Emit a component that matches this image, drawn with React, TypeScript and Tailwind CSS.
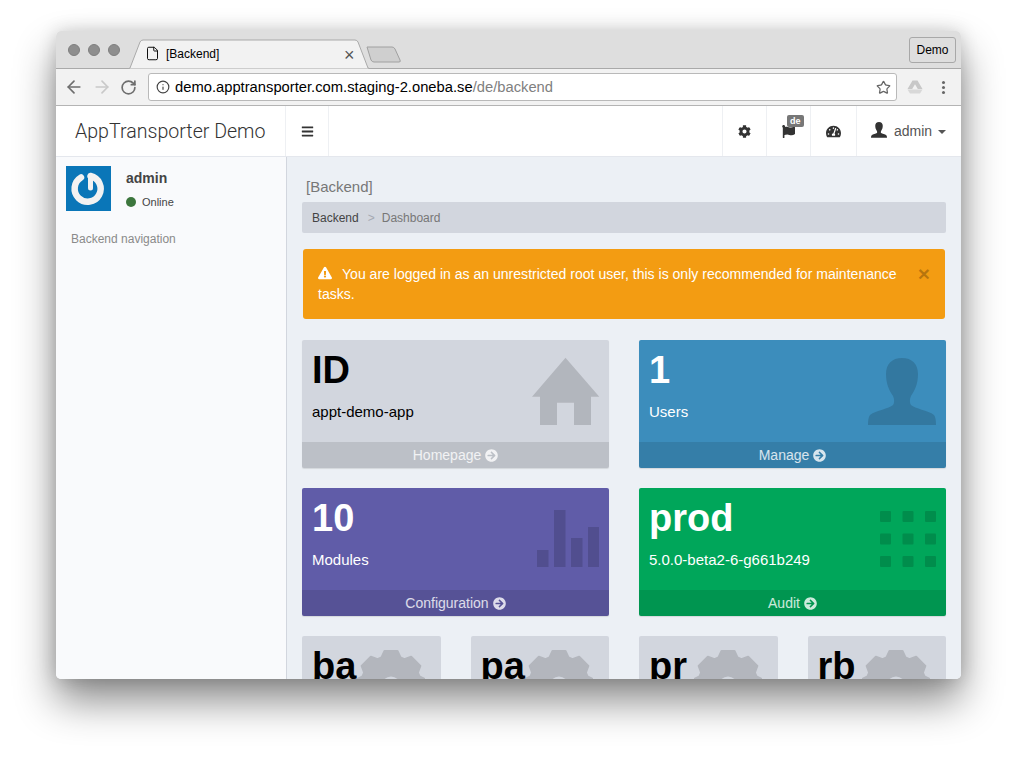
import type { ReactNode } from "react";
import { ArrowLeft, ArrowRight, File, Info, RotateCw, Star } from "lucide-react";
import {
  FaArrowCircleRight,
  FaBars,
  FaCog,
  FaExclamationTriangle,
  FaFlag,
  FaTachometerAlt,
} from "react-icons/fa";

const PERSON =
  "M34 0C44 0 50 6 50 16C50 26 47 32 43 38C41.5 41 41.5 45 43 47C47 51 60 52 66 57C67.5 59 68 62 68 67L0 67C0 62 .5 59 2 57C8 52 21 51 25 47C26.5 45 26.5 41 25 38C21 32 18 26 18 16C18 6 24 0 34 0Z";

function gearPath() {
  const cx = 34;
  const cy = 36;
  const pts: string[] = [];
  for (let i = 0; i < 8; i++) {
    const a = (i * Math.PI) / 4 - Math.PI / 2;
    const cos = Math.cos(a);
    const sin = Math.sin(a);
    const at = (r: number, w: number) =>
      `${(cx + r * cos - w * sin).toFixed(2)} ${(cy + r * sin + w * cos).toFixed(2)}`;
    pts.push(at(28.5, -9.5), at(35, -6.5), at(35, 6.5), at(28.5, 9.5));
  }
  return `M${pts.join("L")}Z`;
}

function HomeIcon() {
  return (
    <svg width="68" height="68" viewBox="0 0 68 68" className="absolute right-[9px] top-[17px] text-black/15">
      <path fill="currentColor" fillRule="evenodd" d="M33.5 0.7L67.3 39.7H59V68H42V45.7H25V68H8V39.7H0Z" />
    </svg>
  );
}

function PersonIcon() {
  return (
    <svg width="68" height="68" viewBox="0 0 68 68" className="absolute right-[10px] top-[18px] text-black/15">
      <path fill="currentColor" d={PERSON} />
    </svg>
  );
}

function BarsIcon() {
  return (
    <svg width="62" height="57" viewBox="0 0 62 57" className="absolute right-[10px] top-[22px] text-black/15">
      <g fill="currentColor">
        <rect x="0" y="40" width="11.5" height="17" />
        <rect x="17" y="0" width="11.5" height="57" />
        <rect x="34" y="28" width="11.5" height="29" />
        <rect x="51" y="17" width="11" height="40" />
      </g>
    </svg>
  );
}

function GridIcon() {
  const pos = [0, 22.5, 45];
  return (
    <svg width="56" height="56" viewBox="0 0 56 56" className="absolute right-[10px] top-[23px] text-black/15">
      <g fill="currentColor">
        {pos.map((y) =>
          pos.map((x) => <rect key={`${x}-${y}`} x={x} y={y} width="11" height="11" rx="1" />),
        )}
      </g>
    </svg>
  );
}

function GearIcon() {
  return (
    <svg width="68" height="72" viewBox="0 0 68 72" className="absolute right-[16px] top-[14px]">
      <path fill="#b3b6bd" stroke="#b3b6bd" strokeWidth="2" strokeLinejoin="round" d={gearPath()} />
      <circle cx="34" cy="36" r="9.5" fill="#d2d6de" />
    </svg>
  );
}

interface BoxProps {
  title: string;
  label: string;
  link: string;
  bg: string;
  foot: string;
  dark?: boolean;
  icon: ReactNode;
}

function StatBox({ title, label, link, bg, foot, dark, icon }: BoxProps) {
  return (
    <div className={`relative flex h-[128px] flex-col overflow-hidden rounded-[2px] shadow-[0_1px_1px_rgba(0,0,0,0.1)] ${bg}`}>
      <div className={`relative flex-1 p-[10px] ${dark ? "text-black" : "text-white"}`}>
        <h3 className="mb-[10px] text-[38px] font-bold leading-[41.8px]">{title}</h3>
        <p className="text-[15px] leading-[20px]">{label}</p>
        {icon}
      </div>
      <div className={`flex h-[26px] items-center justify-center gap-[4px] text-[14px] text-white/80 ${foot}`}>
        {link}
        <FaArrowCircleRight size={13} />
      </div>
    </div>
  );
}

function SmallBox({ title }: { title: string }) {
  return (
    <div className="relative h-[128px] overflow-hidden rounded-[2px] bg-[#d2d6de] p-[10px] text-black">
      <h3 className="relative z-10 text-[38px] font-bold leading-[41.8px]">{title}</h3>
      <GearIcon />
    </div>
  );
}

function NavCell({ className, children }: { className: string; children: ReactNode }) {
  return (
    <div className={`relative flex h-full items-center justify-center border-l border-[#eef0f3] text-[#333] ${className}`}>
      {children}
    </div>
  );
}

export default function App() {
  return (
    <div className="h-[759px] w-[1017px] overflow-hidden bg-white pl-[56px] pt-[31px] font-['Liberation_Sans',Arial,sans-serif]">
      <div className="flex h-[648px] w-[905px] flex-col overflow-hidden rounded-[5px] shadow-[0_22px_40px_rgba(0,0,0,0.46),0_0_18px_rgba(0,0,0,0.16)]">
        {/* browser title bar */}
        <div className="flex h-[38px] shrink-0 items-center border-b border-[#a9a9a9] bg-[#dedede]">
          <div className="flex w-[72px] items-center gap-[8px] pl-[12px]">
            <span className="h-[12px] w-[12px] rounded-full border border-[#7f7f7f] bg-[#8e8e8e]" />
            <span className="h-[12px] w-[12px] rounded-full border border-[#7f7f7f] bg-[#8e8e8e]" />
            <span className="h-[12px] w-[12px] rounded-full border border-[#7f7f7f] bg-[#8e8e8e]" />
          </div>
          <div className="relative flex h-[38px] w-[244px] shrink-0 items-center pl-[17px] pt-[8px]">
            <svg width="244" height="38" viewBox="0 0 244 38" className="absolute left-0 top-0">
              <path d="M0 38L2 37L12 11Q13 9 15 9H227Q229 9 230 11L240 37L243 38Z" fill="#f2f2f2" stroke="#a9a9a9" />
            </svg>
            <File size={15} strokeWidth={1.5} className="relative text-black" />
            <span className="relative ml-[6px] text-[12px] text-black">[Backend]</span>
            <span className="absolute left-[216px] top-[15px] text-[18px] leading-[18px] text-[#555]">×</span>
          </div>
          <svg width="36" height="18" viewBox="0 0 36 18" className="-ml-[6px] mt-[10px]">
            <path d="M1 1H26Q28 1 29 3L34 14Q35 16 33 16H8Q6 16 5 14Z" fill="#cfcfcf" stroke="#a0a0a0" />
          </svg>
          <div className="ml-auto mr-[5px] flex h-[26px] w-[47px] items-center justify-center rounded-[3px] border border-[#a8a8a8] text-[12px] text-black">
            Demo
          </div>
        </div>

        {/* browser toolbar */}
        <div className="flex h-[37px] shrink-0 items-center border-b border-[#b4b4b4] bg-[#f2f2f2]">
          <div className="flex w-[92px] items-center gap-[8px] pl-[8px]">
            <ArrowLeft size={20} strokeWidth={2} className="text-[#6e6e6e]" />
            <ArrowRight size={20} strokeWidth={2} className="text-[#c9c9c9]" />
            <RotateCw size={17} strokeWidth={2.4} className="text-[#6e6e6e]" />
          </div>
          <div className="flex h-[28px] w-[749px] items-center rounded-[3px] border border-[#b9b9b9] bg-white pl-[7px] pr-[5px]">
            <Info size={14} className="text-[#444]" />
            <span className="ml-[5px] text-[14.75px] text-black">
              demo.apptransporter.com.staging-2.oneba.se
              <span className="text-[#808080]">/de/backend</span>
            </span>
            <Star size={15} className="ml-auto text-[#666]" />
          </div>
          <svg width="16" height="14" viewBox="0 0 16 14" className="ml-[10px]">
            <path d="M5.5 0.5H10.5L15.5 9H10.8L8 4.2L5.2 9H.5Z" fill="#c8c8c8" />
            <path d="M3 13.5L.5 9.5H15.5L13 13.5Z" fill="#d8d8d8" />
          </svg>
          <div className="ml-[19px] flex flex-col gap-[2px]">
            <span className="h-[3px] w-[3px] rounded-full bg-[#666]" />
            <span className="h-[3px] w-[3px] rounded-full bg-[#666]" />
            <span className="h-[3px] w-[3px] rounded-full bg-[#666]" />
          </div>
        </div>

        {/* app navbar */}
        <div className="flex h-[51px] shrink-0 items-center border-b border-[#e4e7ed] bg-white">
          <div className="flex h-full w-[229px] items-center pl-[19px] pt-[1px] text-[19.6px] font-['Roboto',sans-serif] font-light text-[#333]">
            AppTransporter Demo
          </div>
          <NavCell className="w-[44px] border-r">
            <FaBars size={13} />
          </NavCell>
          <div className="ml-auto flex h-full">
            <NavCell className="w-[44px]">
              <FaCog size={13} />
            </NavCell>
            <NavCell className="w-[44px]">
              <FaFlag size={13} />
              <span className="absolute left-[20px] top-[9px] rounded-[2px] bg-[#777] px-[3px] text-[9px] font-bold leading-[12px] text-white">
                de
              </span>
            </NavCell>
            <NavCell className="w-[46px]">
              <FaTachometerAlt size={15} />
            </NavCell>
            <NavCell className="w-[105px] justify-start pl-[14px]">
              <svg width="16" height="16" viewBox="0 0 68 68" className="-mt-[2px]">
                <path fill="#333" d={PERSON} />
              </svg>
              <span className="ml-[7px] text-[14px] text-[#555]">admin</span>
              <span className="ml-[6px] mt-[2px] border-x-[4px] border-t-[4px] border-x-transparent border-t-[#555]" />
            </NavCell>
          </div>
        </div>

        {/* page */}
        <div className="flex min-h-0 flex-1">
          <aside className="w-[231px] shrink-0 border-r border-[#d2d6de] bg-[#f9fafc] pl-[10px] pt-[9px]">
            <div className="flex">
              <div className="flex h-[45px] w-[45px] items-center justify-center bg-[#0a76b8]">
                <svg width="45" height="45" viewBox="0 0 45 45">
                  <path d="M15 11.5A13 13 0 1 0 24.5 10" fill="none" stroke="#f2f2f2" strokeWidth="6.5" strokeLinecap="round" />
                  <path d="M24.5 10V22" fill="none" stroke="#f2f2f2" strokeWidth="5" strokeLinecap="round" />
                </svg>
              </div>
              <div className="ml-[15px]">
                <div className="mt-[4px] text-[14px] font-bold leading-[17px] text-[#444]">admin</div>
                <div className="mt-[8px] flex items-center text-[11px] leading-[14px] text-[#444]">
                  <span className="mr-[6px] h-[10px] w-[10px] rounded-full bg-[#3c763d]" />
                  Online
                </div>
              </div>
            </div>
            <div className="ml-[5px] mt-[21px] text-[12px] leading-[14px] text-[#8a8a8a]">Backend navigation</div>
          </aside>

          <main className="min-w-0 flex-1 overflow-hidden bg-[#ecf0f5] pl-[15px] pr-[15px]">
            <div className="pl-[4px] pt-[21px] text-[15px] leading-[17px] text-[#777]">[Backend]</div>
            <div className="mt-[7px] flex h-[31px] items-center rounded-[2px] bg-[#d2d6de] pl-[10px] text-[12px]">
              <span className="text-[#444]">Backend</span>
              <span className="ml-[9px] mr-[7px] text-[#a5a9b3]">&gt;</span>
              <span className="text-[#777]">Dashboard</span>
            </div>
            <div className="relative ml-[1px] mr-[1px] mt-[16px] h-[70px] rounded-[3px] bg-[#f39c12] py-[15px] pl-[15px] pr-[35px] text-[14.05px] leading-[20px] text-white">
              <FaExclamationTriangle size={14} className="mr-[10px] inline-block align-[-1px]" />
              You are logged in as an unrestricted root user, this is only recommended for maintenance tasks.
              <span className="absolute right-[15px] top-[13px] text-[21px] font-bold leading-[24px] text-black/25">×</span>
            </div>
            <div className="mt-[21px] grid grid-cols-2 gap-x-[30px] gap-y-[20px]">
              <StatBox title="ID" label="appt-demo-app" link="Homepage" bg="bg-[#d2d6de]" foot="bg-black/10" dark icon={<HomeIcon />} />
              <StatBox title="1" label="Users" link="Manage" bg="bg-[#3c8dbc]" foot="bg-black/10" icon={<PersonIcon />} />
              <StatBox title="10" label="Modules" link="Configuration" bg="bg-[#605ca8]" foot="bg-black/10" icon={<BarsIcon />} />
              <StatBox title="prod" label="5.0.0-beta2-6-g661b249" link="Audit" bg="bg-[#00a65a]" foot="bg-black/10" icon={<GridIcon />} />
            </div>
            <div className="mt-[20px] grid grid-cols-4 gap-x-[30px]">
              <SmallBox title="ba" />
              <SmallBox title="pa" />
              <SmallBox title="pr" />
              <SmallBox title="rb" />
            </div>
          </main>
        </div>
      </div>
    </div>
  );
}
